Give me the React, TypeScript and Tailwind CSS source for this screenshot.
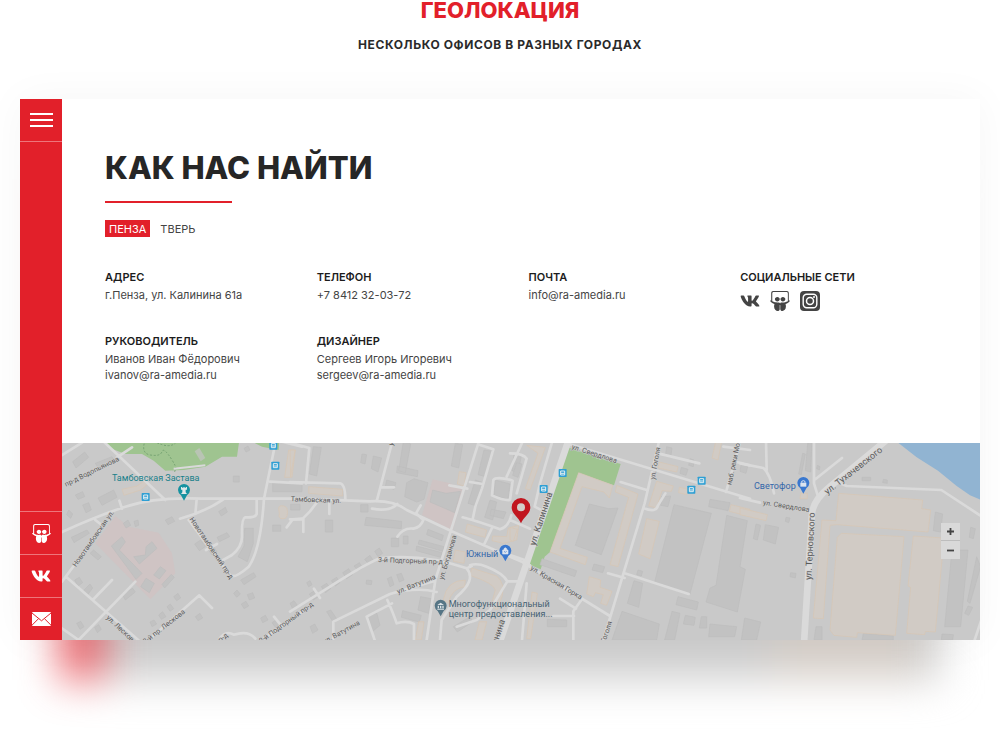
import { useState } from "react";
import type { ReactNode } from "react";
import { FaSlideshare, FaVk } from "react-icons/fa";

type Contact = {
  title: string;
  lines: string[];
};

type MapLabel = {
  text: string;
  x: number;
  y: number;
  angle: number;
  size: number;
};

// Each district is drawn in its own coordinates and shifted along the map
type District = {
  id: string;
  offset: number;
  parks?: string[];
  water?: string[];
  clinics?: string[];
  blocks: string[];
  shops: string[];
  roads: string[];
  avenues?: string[];
  labels: MapLabel[];
  stops: [number, number][];
};

const CITIES = ["Пенза", "Тверь"];

const CONTACTS: Contact[] = [
  { title: "Адрес", lines: ["г.Пенза, ул. Калинина 61а"] },
  { title: "Телефон", lines: ["+7 8412 32-03-72"] },
  { title: "Почта", lines: ["info@ra-amedia.ru"] },
];

const STAFF: Contact[] = [
  { title: "Руководитель", lines: ["Иванов Иван Фёдорович", "ivanov@ra-amedia.ru"] },
  { title: "Дизайнер", lines: ["Сергеев Игорь Игоревич", "sergeev@ra-amedia.ru"] },
];

const DISTRICTS: District[] = [
  {
    id: "west",
    offset: 0,
    parks: [
      "M125 0 L145 25 L190 42 L240 42 L275 62 L310 92 L365 90 L430 80 L480 50 L525 50 L532 0Z",
      "M560 0 L600 20 L650 30 L652 0Z",
    ],
    clinics: ["M160 228 L200 260 L290 278 L330 340 L340 400 L265 478 L100 310Z"],
    blocks: [
      "M148 318 L180 290 L190 306 L172 330 L240 400 L222 418Z",
      "M215 350 L250 345 L252 320 L270 305 L285 325 L232 372Z",
      "M236 440 L252 415 L277 430 L262 458Z",
      "M275 405 L295 380 L312 392 L292 417Z",
      "M300 433 L328 403 L337 412 L308 444Z",
      "M32 65 L68 36 L80 52 L42 84Z",
      "M100 70 L150 50 L160 66 L112 90Z",
      "M108 174 L155 150 L165 172 L120 196Z",
      "M40 165 L62 155 L68 170 L48 178Z",
      "M62 195 L80 188 L88 210 L72 218Z",
      "M20 210 L32 222 L26 235 L14 224Z",
      "M84 340 L95 330 L118 350 L108 360Z",
      "M28 292 L75 270 L82 280 L36 308Z",
      "M38 420 L52 412 L62 428 L48 438Z",
      "M64 452 L84 432 L92 444 L74 468Z",
      "M180 462 L212 445 L220 456 L190 480Z",
      "M184 250 L198 240 L206 256 L192 264Z",
      "M216 244 L228 240 L230 256 L220 260Z",
      "M310 240 L330 230 L338 244 L318 254Z",
      "M514 108 H532 V126 H514Z",
      "M546 25 L558 18 L564 30 L552 36Z",
      "M548 265 H574 V310 L556 365 L528 350 L546 318Z",
      "M398 312 L416 300 L430 320 L412 332Z",
      "M440 330 L455 320 L465 335 L450 345Z",
      "M465 292 L495 278 L503 290 L472 305Z",
      "M470 215 L490 202 L496 216 L478 228Z",
      "M536 420 L575 398 L582 410 L546 434Z",
      "M632 130 H720 V155 H632Z",
      "M632 255 H656 V274 H632Z",
      "M686 193 H714 V210 H686Z",
      "M515 460 L525 450 L535 462 L524 472Z",
      "M556 464 L572 458 L578 474 L562 480Z",
      "M538 492 L552 484 L560 498 L546 506Z",
      "M596 534 L610 526 L618 540 L602 548Z",
      "M630 548 L645 538 L655 552 L640 562Z",
      "M400 530 L414 520 L422 534 L408 542Z",
      "M335 470 L348 460 L356 474 L344 482Z",
      "M315 500 L325 492 L335 506 L324 514Z",
      "M290 525 L302 515 L312 530 L298 538Z",
      "M264 546 L276 540 L284 552 L270 560Z",
      "M44 550 L56 544 L66 560 L54 568Z",
      "M98 562 L110 554 L118 568 L106 578Z",
    ],
    shops: [
      "M180 148 L225 138 L245 124 L258 132 L236 150 L186 166Z",
      "M680 30 H700 L690 112 H668Z",
      "M650 205 Q650 195 665 198 Q678 200 676 220 Q676 238 660 236 Q648 234 652 222Z",
    ],
    roads: [
      "M0 276 Q100 230 190 200 T420 176 L720 176",
      "M0 45 L60 8",
      "M120 0 L310 180",
      "M165 52 L210 22",
      "M172 182 L180 206",
      "M100 240 L120 256",
      "M130 250 L0 425",
      "M12 410 L240 610",
      "M50 600 L220 425",
      "M92 480 L150 420",
      "M0 565 L50 600",
      "M404 178 L400 222 M354 236 Q430 215 484 178",
      "M642 0 L606 176 Q596 330 560 380 Q520 415 505 407 L380 240",
      "M584 178 V222 Q580 234 550 232 Q538 236 540 290 Q540 320 510 345 L480 362",
      "M432 330 L465 312",
      "M624 125 L720 130",
      "M640 0 L720 20",
      "M720 236 L692 238 L674 262",
      "M260 600 L412 466 L450 504",
      "M470 600 Q490 570 515 584 Q560 570 580 596",
      "M600 600 L720 515 M636 530 L660 560",
    ],
    labels: [
      { text: "пр-д Водопьянова", x: 12, y: 140, angle: -26, size: 21 },
      { text: "Новотамбовская ул.", x: 42, y: 382, angle: -55, size: 21 },
      { text: "Новотамбовский пр-д", x: 382, y: 238, angle: 56, size: 21 },
      { text: "ул. Лескова", x: 132, y: 535, angle: 43, size: 21 },
      { text: "2-й пр. Лескова", x: 250, y: 612, angle: -38, size: 21 },
      { text: "2-й Подгорный пр-д", x: 598, y: 610, angle: -36, size: 21 },
      { text: "пр-д", x: 465, y: 614, angle: -36, size: 21 },
    ],
    stops: [
      [251, 171],
      [634, 17],
      [640, 77],
    ],
  },
  {
    id: "center",
    offset: 684,
    clinics: ["M428 118 L480 130 L522 152 L488 272 L396 225Z"],
    blocks: [
      "M70 20 L94 22 L80 108 L58 102Z",
      "M340 5 L362 12 L346 98 L326 92Z",
      "M322 78 L384 92 L382 110 L320 98Z",
      "M350 128 L372 116 L414 128 L402 178 L380 186 L344 170Z",
      "M216 42 L230 44 L225 72 L212 68Z",
      "M250 48 L275 54 L264 96 L244 86Z",
      "M428 150 L468 160 L512 154 L494 218 L462 204 L420 186Z",
      "M228 232 L335 244 L334 266 L224 256Z",
      "M106 240 H128 V276 H106Z",
      "M212 194 H234 V216 H212Z",
      "M290 120 L318 128 L312 148 L286 140Z",
      "M304 294 H326 V320 H304Z",
      "M340 288 H354 V312 H340Z",
      "M414 268 L460 286 L456 302 L410 284Z",
      "M388 300 L462 320 L458 334 L384 312Z",
      "M380 318 L456 338 L452 352 L378 332Z",
      "M496 10 L518 14 L506 84 L484 78Z",
      "M582 30 L610 34 L588 110 L564 104Z",
      "M556 120 L580 128 L560 198 L534 190Z",
      "M600 180 L620 186 L608 240 L584 232Z",
      "M672 42 L694 48 L684 98 L666 92Z",
      "M616 120 L660 132 L654 178 L612 166Z",
      "M604 208 L648 216 L640 236 L600 226Z",
      "M94 440 L110 430 L122 446 L106 458Z",
      "M124 422 L140 412 L150 428 L136 438Z",
      "M158 398 L176 386 L188 404 L170 416Z",
      "M192 378 L208 368 L218 384 L204 392Z",
      "M224 358 L240 346 L250 362 L236 372Z",
      "M254 334 L268 324 L278 340 L264 350Z",
      "M58 462 L74 452 L86 470 L70 480Z",
      "M292 416 L304 410 L312 434 L300 440Z",
      "M320 404 L334 400 L342 420 L328 426Z",
      "M230 420 L246 422 L244 434 L228 432Z",
      "M50 428 L60 422 L66 434 L56 440Z",
      "M338 512 L394 526 L388 546 L334 532Z",
      "M392 470 L424 476 L416 520 L384 510Z",
      "M490 560 L540 530 L548 545 L502 576Z",
      "M230 530 L260 518 L270 556 L248 574Z",
      "M110 515 L122 510 L140 536 L128 544Z",
      "M60 560 L74 552 L84 570 L68 580Z",
      "M0 490 L12 482 L22 496 L8 506Z",
    ],
    shops: [
      "M56 140 L158 148 V168 L56 160Z",
      "M0 30 L15 30 L2 110Z",
      "M508 95 L528 98 L522 138 L502 132Z",
      "M532 252 L590 270 L585 292 L526 276Z",
      "M608 288 L650 290 L655 264 L686 256 L680 300 L640 310 L606 302Z",
      "M496 330 L526 336 L522 370 L490 364Z",
      "M545 384 L620 408 Q646 430 636 470 L622 510 L602 500 L616 450 Q612 430 540 406Z",
      "M460 480 Q470 420 526 420 L524 440 Q484 445 475 490Z",
      "M376 600 L386 545 H402 L394 600Z",
      "M555 600 L568 545 H590 L576 600Z",
    ],
    roads: [
      "M30 176 L240 184 Q310 180 350 210 L490 276 L720 376",
      "M308 0 L260 184",
      "M272 142 L312 142",
      "M0 126 L150 130 Q166 132 166 180",
      "M0 8 L58 24 L48 130",
      "M80 188 L60 214 L36 238 L0 238 M40 236 V276",
      "M118 190 V222",
      "M246 206 Q300 216 322 192",
      "M392 196 L378 220 L400 240 Q392 262 370 266 Q340 262 322 290",
      "M568 0 L436 420 L410 600",
      "M478 136 L532 146",
      "M540 126 L578 132",
      "M568 14 L610 28 L576 145 L556 200 L548 238",
      "M700 0 L650 110 M610 120 Q620 108 668 122 L660 180 Q640 182 606 166 Z",
      "M518 232 Q570 246 630 268 Q656 260 664 226",
      "M606 264 L584 310",
      "M660 240 L720 266",
      "M0 515 L120 440 Q230 370 270 355 Q400 340 530 385 L545 378",
      "M72 446 L90 474",
      "M430 424 L300 462 L130 545 V600",
      "M300 462 Q380 440 440 456",
      "M292 480 Q310 520 320 550 Q350 540 372 552 V600",
      "M306 490 L230 530 L254 600",
      "M540 376 Q560 368 590 380 Q640 400 652 424 L600 510 L560 540 L500 560",
      "M652 424 L690 424",
      "M530 385 Q560 420 500 470 L455 540 L450 600",
    ],
    avenues: ["M836 0 L628 610"],
    labels: [
      { text: "Тамбовская ул.", x: 2, y: 184, angle: 2, size: 21 },
      { text: "3-й Подгорный пр-д", x: 264, y: 366, angle: 2, size: 21 },
      { text: "ул. Ватутина", x: 324, y: 462, angle: -22, size: 21 },
      { text: "ул. Ватутина", x: 104, y: 612, angle: -29, size: 21 },
      { text: "ул. Богданова", x: 460, y: 420, angle: -73, size: 21 },
      { text: "ул.", x: 308, y: 18, angle: -70, size: 21 },
      { text: "ул. Калинина", x: 594, y: 700, angle: -72, size: 27 },
    ],
    stops: [],
  },
  {
    id: "kalinina",
    offset: 1344,
    parks: ["M172 22 L332 72 L312 136 L206 98 L120 336 L104 350 L92 388 L54 372Z"],
    blocks: [
      "M238 192 L296 206 L324 204 L274 344 L196 316Z",
      "M492 194 L604 220 L540 462 L434 426Z",
      "M650 226 L712 242 L690 380 L706 388 L682 516 L588 486 L600 444 L618 436Z",
      "M600 178 L660 188 L654 212 L596 200Z",
      "M96 356 L200 392 L194 410 L90 374Z",
      "M252 372 L284 380 L278 398 L246 390Z",
      "M372 422 L398 430 L386 502 L352 490Z",
      "M336 514 L448 552 L440 600 H306Z",
      "M504 470 L565 486 L560 510 L498 494Z",
      "M526 526 L556 532 L552 556 L520 552Z",
      "M486 514 L510 520 L494 600 H464Z",
      "M574 530 H590 V564 H568Z",
      "M600 552 L680 560 L674 590 H596Z",
      "M112 538 L170 540 V560 H112Z",
      "M384 390 L398 394 L394 408 L380 404Z",
      "M514 82 L534 88 L528 106 L510 100Z",
      "M470 20 L486 24 L482 52 L466 48Z",
      "M694 70 L714 76 L708 100 L690 94Z",
      "M540 56 L552 60 L550 80 L536 76Z",
      "M454 170 L482 168 L474 200 L452 196Z",
      "M20 68 L36 72 L24 112 L8 106Z",
    ],
    shops: [
      "M206 98 L308 136 L298 174 L282 156 L216 140 L150 325 L232 352 L226 374 L120 336Z",
      "M320 136 L384 162 L324 380 L300 374 L356 172 L316 156Z",
      "M410 236 L448 244 L420 356 L386 342Z",
      "M440 124 L490 138 L484 154 L456 152 L440 204 L416 198Z",
      "M448 66 L504 80 L500 96 L444 84Z",
      "M508 142 L536 148 L530 164 L506 158Z",
      "M618 0 H636 L624 60 L606 54Z",
      "M238 410 L272 420 L270 442 L306 454 L290 496 L272 490 L280 464 L256 458 L250 470 L230 462Z",
      "M66 456 L82 460 L62 596 H50Z",
      "M50 16 L106 22 L60 150 L46 146 L84 40Z",
      "M663 194 L720 208 V230 L658 214Z",
      "M0 262 L22 268 L10 304 L0 300Z",
    ],
    roads: [
      "M170 10 L720 176",
      "M448 0 L404 190 L280 600",
      "M400 204 Q440 220 444 196 L466 160",
      "M332 126 L410 150",
      "M444 40 L568 70",
      "M648 156 L692 0",
      "M640 20 L720 30 M680 66 L720 76",
      "M344 400 L536 462 M294 400 L344 414",
      "M40 368 L300 528",
      "M214 480 L190 514 V600 M130 528 H192 M150 476 L198 506",
      "M128 0 L90 130 L74 200 L90 208",
      "M0 40 Q40 40 50 56 L20 160",
      "M0 345 L44 360",
      "M50 430 L36 600",
    ],
    labels: [
      { text: "ул. Свердлова", x: 184, y: 26, angle: 18, size: 21 },
      { text: "ул. Гоголя", x: 434, y: 120, angle: -80, size: 21 },
      { text: "ул. Гоголя", x: 276, y: 640, angle: -72, size: 21 },
      { text: "наб. реки Мойки", x: 664, y: 136, angle: -78, size: 21 },
      { text: "ул. Калинина", x: 76, y: 318, angle: -72, size: 27 },
      { text: "ул. Красная Горка", x: 60, y: 388, angle: 31, size: 21 },
    ],
    stops: [
      [158, 99],
      [101, 147],
      [544, 149],
      [575, 122],
    ],
  },
  {
    id: "east",
    offset: 2034,
    water: ["M464 0 L530 52 L594 92 L650 138 L690 166 L724 180 V0Z"],
    blocks: [
      "M76 254 L116 262 L106 312 L70 300Z",
      "M48 252 L62 256 L52 300 L40 296Z",
      "M138 232 L150 234 L146 248 L136 244Z",
      "M152 398 L168 400 L166 414 L150 410Z",
      "M14 534 L62 546 L50 600 H4Z",
      "M228 560 H246 V600 H222Z",
      "M636 330 H684 L662 560 H614Z",
      "M586 216 L608 222 L602 276 L580 272Z",
      "M692 262 L706 266 L700 296 L688 292Z",
      "M710 350 L722 380 L690 490 L682 484Z",
      "M684 498 L698 502 L686 526 L674 520Z",
      "M606 582 L640 584 L638 600 H604Z",
      "M366 112 H392 V122 H366Z",
      "M430 118 L442 120 V130 L428 128Z",
      "M188 40 L196 42 L184 104 L176 102Z",
      "M204 0 H216 L212 96 L196 92Z",
      "M232 76 L240 80 L238 90 L230 86Z",
      "M370 580 L460 588 V600 H366Z",
    ],
    shops: [
      "M296 160 L548 180 L545 206 L572 210 L564 276 L292 254 L270 256 L250 536 L220 534 L246 240 L288 242Z",
      "M304 280 L492 290 L466 586 L352 578 L350 592 L282 586 L270 570 L292 292Z",
      "M520 288 L612 294 L586 576 L556 574 L554 584 L500 580 L512 442 L504 438Z",
      "M0 204 L82 224 L78 242 L0 224Z",
      "M182 160 H202 V176 H180Z",
    ],
    roads: [
      "M0 174 L60 188 M196 212 L216 212",
      "M0 70 L70 84 Q90 100 102 160 M78 0 L80 90",
      "M222 0 V130 L236 176",
      "M226 118 L306 54",
      "M300 130 L320 138 L604 150 L720 226",
      "M704 600 L724 540",
    ],
    avenues: ["M440 0 L270 140 Q220 180 216 220 L192 610"],
    labels: [
      { text: "ул. Тухачевского", x: 262, y: 164, angle: -38, size: 27 },
      { text: "ул. Свердлова", x: 68, y: 194, angle: 9, size: 21 },
      { text: "ул. Терновского", x: 214, y: 420, angle: -87, size: 27 },
    ],
    stops: [],
  },
];

const InstagramIcon = () => (
  <svg viewBox="0 0 20 20" className="size-5" aria-hidden="true">
    <rect width="20" height="20" rx="4" fill="currentColor" />
    <rect x="3.2" y="3.2" width="13.6" height="13.6" rx="3.5" fill="none" stroke="#fff" strokeWidth="1.4" />
    <circle cx="10" cy="10" r="3.5" fill="none" stroke="#fff" strokeWidth="1.5" />
    <circle cx="14" cy="6" r="1" fill="#fff" />
  </svg>
);

const MailIcon = () => (
  <svg viewBox="0 0 19 14" className="h-[14px] w-[19px]" aria-hidden="true">
    <rect width="19" height="14" rx="1" fill="currentColor" />
    <path d="M0 1 L9.5 8.8 L19 1 M0 13.2 L6.6 6.6 M19 13.2 L12.4 6.6" fill="none" stroke="#e2202a" strokeWidth="1" />
  </svg>
);

const SidebarLink = ({ label, children }: { label: string; children: ReactNode }) => (
  <a
    href="#"
    aria-label={label}
    className="flex h-[43px] items-center justify-center border-t border-[#ee757b] text-white"
  >
    {children}
  </a>
);

const Sidebar = () => (
  <aside className="flex w-[42px] shrink-0 flex-col justify-between bg-[#e2202a]">
    <button
      type="button"
      aria-label="Меню"
      className="flex h-[43px] flex-col items-center justify-center gap-1 border-b border-[#ee757b]"
    >
      <span className="h-0.5 w-[23px] bg-white" />
      <span className="h-0.5 w-[23px] bg-white" />
      <span className="h-0.5 w-[23px] bg-white" />
    </button>
    <nav>
      <SidebarLink label="SlideShare">
        <FaSlideshare size={19} />
      </SidebarLink>
      <SidebarLink label="ВКонтакте">
        <FaVk size={20} />
      </SidebarLink>
      <SidebarLink label="Почта">
        <MailIcon />
      </SidebarLink>
    </nav>
  </aside>
);

const ContactBlock = ({ title, lines }: Contact) => (
  <div>
    <h3 className="text-[11px] leading-4 font-semibold text-[#1c1c1c] uppercase">{title}</h3>
    <div className="mt-0.5">
      {lines.map((line) => (
        <p key={line} className="text-[11px] leading-4 text-[#444444]">
          {line}
        </p>
      ))}
    </div>
  </div>
);

const PlacePin = ({ x, y, color, children }: { x: number; y: number; color: string; children: ReactNode }) => (
  <g transform={`translate(${x} ${y})`}>
    <path d="M0 29 L-9 13 Q-18 6 -18 -3 A18 18 0 0 1 18 -3 Q18 6 9 13Z" fill={color} />
    {children}
  </g>
);

const CityMap = () => (
  <svg
    viewBox="0 9 2754 591"
    preserveAspectRatio="xMidYMid slice"
    className="block h-full w-full bg-[#c9c9c9] font-[Roboto,sans-serif]"
    role="img"
    aria-label="Карта"
  >
    {DISTRICTS.map((d) => (
      <g key={d.id} transform={`translate(${d.offset} 0)`}>
        <path d={d.clinics?.join(" ")} fill="#cfc4c4" />
        <path d={d.parks?.join(" ")} fill="#9fc490" />
        <path d={d.water?.join(" ")} fill="#91b4d2" />
        <path d={d.blocks.join(" ")} fill="#c2c2c2" stroke="#bcbcbc" strokeWidth="2" />
        <path d={d.shops.join(" ")} fill="#d1cbc5" stroke="#d8c6b2" strokeWidth="2" />
      </g>
    ))}
    <path
      d="M250 0 Q235 40 265 45 T300 35 T330 60 T330 92 M285 8 Q320 25 340 10"
      fill="none"
      stroke="#74a271"
      strokeWidth="3"
      strokeDasharray="6 5"
    />
    <path d="M335 86 L430 76" stroke="#d9d9d9" strokeWidth="6" />
    <path d="M398 34 L412 24 L430 54 L416 64Z" fill="#b9c4b4" />
    {DISTRICTS.map((d) => (
      <g key={d.id} transform={`translate(${d.offset} 0)`} fill="none" stroke="#dadada" strokeLinecap="round">
        <path d={d.roads.join(" ")} strokeWidth="8" strokeLinejoin="round" />
        <path d={d.avenues?.join(" ")} strokeWidth="20" strokeLinejoin="round" />
      </g>
    ))}
    {DISTRICTS.map((d) => (
      <g key={d.id} transform={`translate(${d.offset} 0)`}>
        {d.labels.map((l) => (
          <text
            key={`${l.text}${l.x}`}
            transform={`translate(${l.x} ${l.y}) rotate(${l.angle})`}
            fontSize={l.size}
            fill="#5a5a5a"
            stroke="#d0d0d0"
            strokeWidth="3"
            paintOrder="stroke"
          >
            {l.text}
          </text>
        ))}
        {d.stops.map(([x, y]) => (
          <g key={`${x}-${y}`} transform={`translate(${x} ${y})`}>
            <rect x="-12" y="-12" width="24" height="24" rx="2" fill="#2e9fd4" />
            <path d="M-6 -6 H6 V6 H-6Z M-6 1 H6" fill="#2e9fd4" stroke="#e4eef2" strokeWidth="3" />
          </g>
        ))}
      </g>
    ))}

    <text x="150" y="123" fontSize="27" fill="#17808a">Тамбовская Застава</text>
    <PlacePin x={366} y={153} color="#1592a0">
      <path d="M-9 -12 H-5 V-9 H-2 V-12 H2 V-9 H5 V-12 H9 V-4 H5 V4 L9 9 H-9 L-5 4 V-4 H-9Z" fill="#dfe9ea" />
    </PlacePin>

    <text x="1212" y="351" fontSize="27" fill="#3467a9">Южный</text>
    <PlacePin x={1330} y={335} color="#3a78cf">
      <path d="M-8 -5 H8 V7 H-8Z M-4 -5 V-9 Q0 -14 4 -9 V-5" fill="#dce4ef" stroke="#dce4ef" strokeWidth="2" />
      <path d="M-4 -1 Q0 5 4 -1" fill="none" stroke="#3a78cf" strokeWidth="2" />
    </PlacePin>

    <text x="2076" y="146" fontSize="27" fill="#3467a9">Светофор</text>
    <PlacePin x={2224} y={132} color="#3a78cf">
      <path d="M-9 -4 H9 V8 H-9Z" fill="#dce4ef" />
      <path d="M-5 -4 V-8 Q0 -12 5 -8 V-4" fill="none" stroke="#dce4ef" strokeWidth="3" />
    </PlacePin>

    <text fontSize="27" fill="#476373">
      <tspan x="1160" y="501">Многофункциональный</tspan>
      <tspan x="1160" y="531">центр предоставления...</tspan>
    </text>
    <PlacePin x={1136} y={500} color="#557585">
      <path d="M-10 -5 L0 -12 L10 -5Z M-9 -3 H-5 V5 H-9Z M-2 -3 H2 V5 H-2Z M5 -3 H9 V5 H5Z M-10 6 H10 V9 H-10Z" fill="#dde3e6" />
    </PlacePin>

    {/* офис */}
    <path
      d="M1377 250 C1370 232 1349 222 1349 202 A28 28 0 0 1 1405 202 C1405 222 1384 232 1377 250Z"
      fill="#c1161f"
    />
    <circle cx="1377" cy="202" r="12" fill="#d3cdc9" />
  </svg>
);

export default function App() {
  const [city, setCity] = useState(CITIES[0]);

  return (
    <div className="min-h-[744px] overflow-hidden bg-white font-[Inter,sans-serif]">
      <header className="text-center">
        <h1 className="text-[22px] leading-5 font-extrabold text-[#e2202a] uppercase">Геолокация</h1>
        <p className="mt-[17px] text-xs leading-4 font-bold tracking-wider text-[#2a2a2a] uppercase">
          Несколько офисов в разных городах
        </p>
      </header>

      <main className="relative isolate mx-5 mt-[46px]">
        {/* размытое отражение карточки */}
        <div className="absolute inset-x-10 top-20 -bottom-10 -z-10 flex blur-[20px]">
          <div className="w-11 bg-[#e2202a]/70" />
          <div className="flex-1 bg-[#cecece]" />
          <div className="w-36 bg-[#d6cfc9]" />
          <div className="w-6 bg-[#cecece]" />
        </div>

        <div className="flex bg-white shadow-[0_0_40px_rgba(0,0,0,0.04)]">
          <Sidebar />

          <div className="min-w-0 flex-1">
            <section className="pt-[49px] pr-7 pb-[60px] pl-[43px]">
              <h2 className="text-[31px] leading-10 font-extrabold text-[#262626] uppercase">Как нас найти</h2>
              <div className="mt-[13px] h-0.5 w-[127px] bg-[#e2202a]" />

              <div className="mt-[17px] flex gap-1.5">
                {CITIES.map((name) => (
                  <button
                    key={name}
                    type="button"
                    onClick={() => setCity(name)}
                    className={
                      name === city
                        ? "h-[17px] bg-[#e2202a] px-1 text-[11px] leading-4 text-white uppercase"
                        : "h-[17px] px-1 text-[11px] leading-4 text-[#444444] uppercase"
                    }
                  >
                    {name}
                  </button>
                ))}
              </div>

              <div className="mt-8 grid grid-cols-4 gap-y-[22px]">
                {CONTACTS.map((contact) => (
                  <ContactBlock key={contact.title} {...contact} />
                ))}
                <div>
                  <h3 className="text-[11px] leading-4 font-semibold text-[#1c1c1c] uppercase">Социальные сети</h3>
                  <div className="mt-1.5 flex items-center gap-2.5 text-[#444444]">
                    <a href="#" aria-label="ВКонтакте">
                      <FaVk size={20} />
                    </a>
                    <a href="#" aria-label="SlideShare">
                      <FaSlideshare size={20} />
                    </a>
                    <a href="#" aria-label="Instagram">
                      <InstagramIcon />
                    </a>
                  </div>
                </div>
                {STAFF.map((person) => (
                  <ContactBlock key={person.title} {...person} />
                ))}
              </div>
            </section>

            <section className="relative h-[197px]">
              <CityMap />
              <div className="absolute top-20 right-5 flex w-[19px] flex-col divide-y divide-[#bdbdbd] bg-[#d9d9d9]">
                <button type="button" aria-label="Приблизить" className="flex h-[18px] items-center justify-center">
                  <svg viewBox="0 0 7 7" className="size-[7px]" aria-hidden="true">
                    <path d="M0 3.5 H7 M3.5 0 V7" stroke="#444" strokeWidth="1.8" />
                  </svg>
                </button>
                <button type="button" aria-label="Отдалить" className="flex h-[18px] items-center justify-center">
                  <svg viewBox="0 0 7 7" className="size-[7px]" aria-hidden="true">
                    <path d="M0 3.5 H7" stroke="#444" strokeWidth="1.8" />
                  </svg>
                </button>
              </div>
            </section>
          </div>
        </div>
      </main>
    </div>
  );
}
